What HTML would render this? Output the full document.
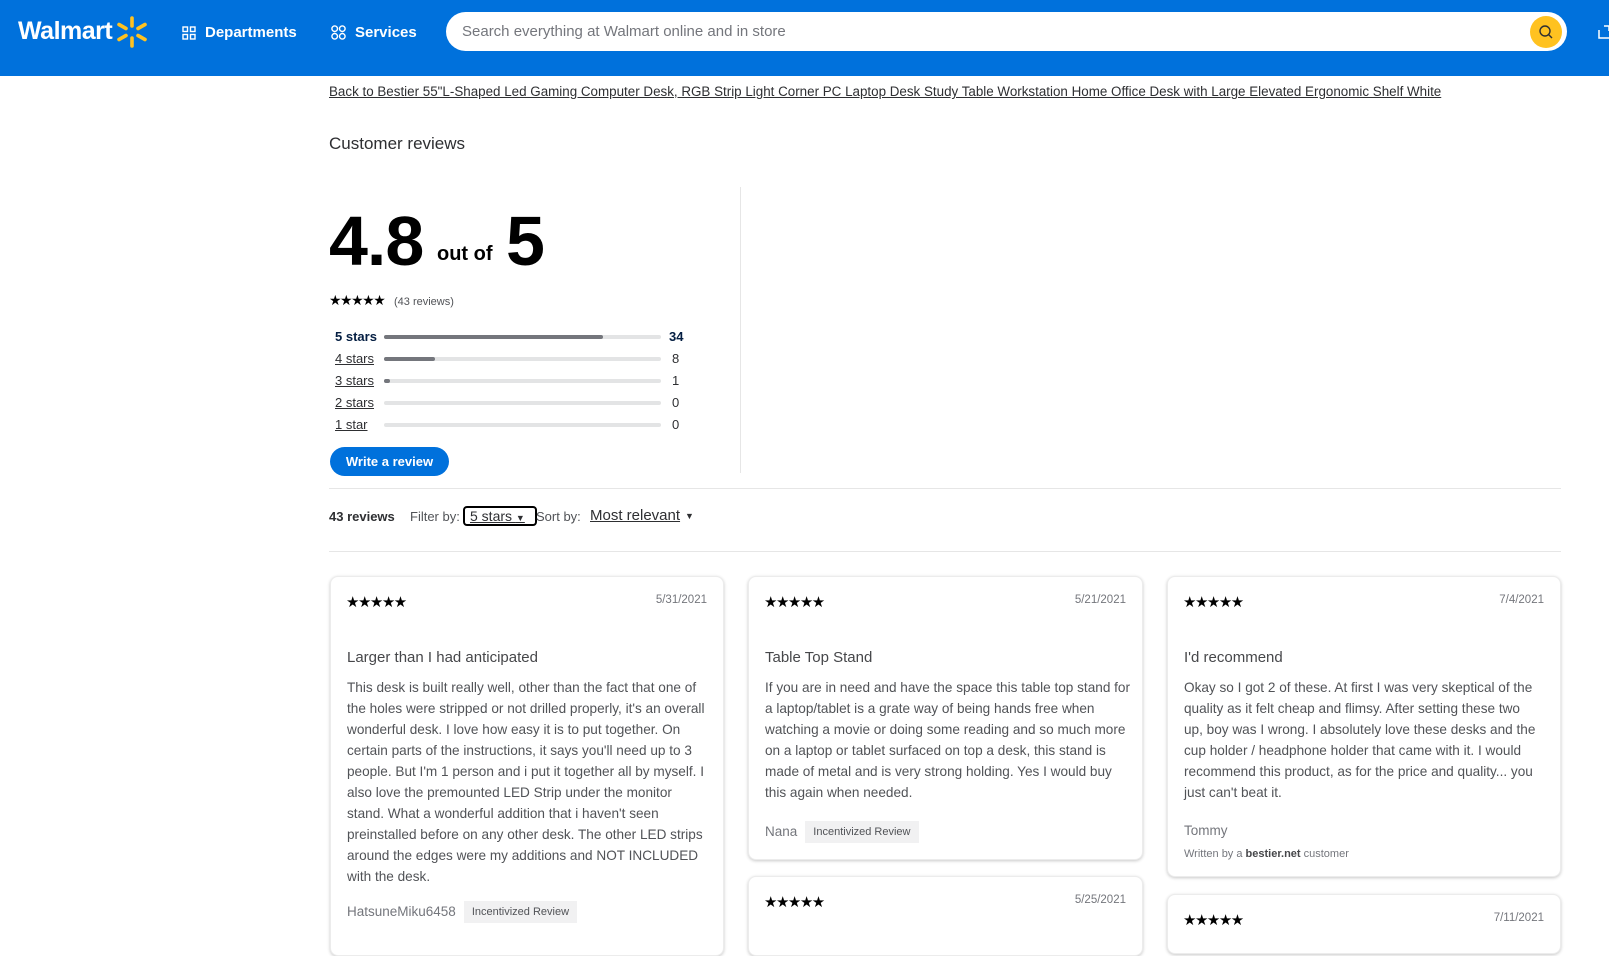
<!DOCTYPE html>
<html><head><meta charset="utf-8"><style>
*{margin:0;padding:0;box-sizing:border-box}
body{width:1609px;height:935px;overflow:hidden;background:#fff;font-family:"Liberation Sans",sans-serif;color:#2e2f32;position:relative}
.a{position:absolute;white-space:nowrap}
.hdr{position:absolute;left:0;top:0;width:1609px;height:76px;background:#0071dc}
.search{position:absolute;left:446px;top:12px;width:1121px;height:39px;background:#fff;border-radius:20px}
.sbtn{position:absolute;left:1530px;top:16px;width:32px;height:32px;border-radius:50%;background:#ffc220}
.bar{position:absolute;left:384px;width:277px;height:4px;background:#e3e4e5;border-radius:2px}
.bar i{position:absolute;left:0;top:0;height:4px;background:#74767c;border-radius:2px}
.lbl{position:absolute;left:335px;font-size:13px;text-decoration:underline;color:#2e2f32}
.cnt{position:absolute;left:672px;font-size:13px}
.card{position:absolute;background:#fff;border-radius:8px;box-shadow:0 1px 3px rgba(0,0,0,.22);border:1px solid #ececec}
.stars{position:absolute;left:15px;top:16px;font-size:15px;letter-spacing:-1.5px;color:#000}
.date{position:absolute;right:16px;top:17px;font-size:11.5px;color:#74767c}
.ttl{position:absolute;left:16px;top:72px;font-size:15px;color:#46474a}
.body{position:absolute;left:16px;top:100px;font-size:13.6px;line-height:21px;color:#515357;white-space:nowrap}
.name{font-size:13.5px;color:#74767c}
.badge{display:inline-block;background:#f1f1f2;color:#515357;font-size:11px;padding:5px 8px;margin-left:8px;vertical-align:middle}
</style></head><body>
<div class="hdr">
 <div class="a" style="left:18px;top:17px;font-size:25px;font-weight:bold;color:#fff;letter-spacing:-0.5px">Walmart</div>
 <svg class="a" style="left:116px;top:15px" width="32" height="34" viewBox="0 0 32 34"><g stroke="#ffc220" stroke-width="3.6" stroke-linecap="round"><line x1="16" y1="3" x2="16" y2="11"/><line x1="16" y1="23" x2="16" y2="31"/><line x1="3" y1="9.5" x2="10" y2="13.5"/><line x1="29" y1="9.5" x2="22" y2="13.5"/><line x1="3" y1="24.5" x2="10" y2="20.5"/><line x1="29" y1="24.5" x2="22" y2="20.5"/></g></svg>
 <svg class="a" style="left:182px;top:26px" width="14" height="14" viewBox="0 0 14 14" fill="none" stroke="#fff" stroke-width="1.4"><rect x="1" y="1" width="4.5" height="4.5"/><rect x="8.5" y="1" width="4.5" height="4.5"/><rect x="1" y="8.5" width="4.5" height="4.5"/><rect x="8.5" y="8.5" width="4.5" height="4.5"/></svg>
 <div class="a" style="left:205px;top:24px;font-size:15px;font-weight:bold;color:#fff">Departments</div>
 <svg class="a" style="left:331px;top:25px" width="15" height="15" viewBox="0 0 15 15" fill="none" stroke="#fff" stroke-width="1.4"><circle cx="3.7" cy="3.7" r="2.8"/><circle cx="11.3" cy="3.7" r="2.8"/><circle cx="3.7" cy="11.3" r="2.8"/><circle cx="11.3" cy="11.3" r="2.8"/></svg>
 <div class="a" style="left:355px;top:24px;font-size:15px;font-weight:bold;color:#fff">Services</div>
 <div class="search"><div class="a" style="left:16px;top:11px;font-size:15px;color:#74767c">Search everything at Walmart online and in store</div></div>
 <div class="sbtn"><svg width="32" height="32" viewBox="0 0 32 32" fill="none" stroke="#2e2f32" stroke-width="1.4"><circle cx="15" cy="15" r="5"/><line x1="18.5" y1="18.5" x2="22" y2="22"/></svg></div>
 <svg class="a" style="left:1598px;top:24px" width="14" height="16" viewBox="0 0 14 16" fill="none" stroke="#fff" stroke-width="1.5"><path d="M1 6v8h12"/><path d="M6 2h5v5"/></svg>
</div>
<div class="a" style="left:329px;top:84px;font-size:13.4px;text-decoration:underline;color:#2e2f32">Back to Bestier 55"L-Shaped Led Gaming Computer Desk, RGB Strip Light Corner PC Laptop Desk Study Table Workstation Home Office Desk with Large Elevated Ergonomic Shelf White</div>
<div class="a" style="left:329px;top:134px;font-size:17px;color:#2e2f32">Customer reviews</div>
<div class="a" style="left:329px;top:201px;font-size:70px;font-weight:bold;color:#000;letter-spacing:-1px">4.8</div>
<div class="a" style="left:437px;top:243px;font-size:20px;font-weight:bold;color:#000">out of</div>
<div class="a" style="left:506px;top:201px;font-size:70px;font-weight:bold;color:#000">5</div>
<div class="a" style="left:740px;top:187px;width:1px;height:286px;background:#e6e6e6"></div>
<div class="a" style="left:329px;top:292px;font-size:14px;color:#000;letter-spacing:-1.5px">★★★★★</div>
<div class="a" style="left:394px;top:296px;font-size:11px;color:#515357">(43 reviews)</div>
<div class="lbl" style="top:329px;font-weight:bold;text-decoration:none;color:#041e42">5 stars</div>
<div class="bar" style="top:335px"><i style="width:219px"></i></div>
<div class="cnt" style="top:329px;left:669px;font-weight:bold;color:#041e42">34</div>
<div class="lbl" style="top:351px">4 stars</div>
<div class="bar" style="top:357px"><i style="width:51px"></i></div>
<div class="cnt" style="top:351px">8</div>
<div class="lbl" style="top:373px">3 stars</div>
<div class="bar" style="top:379px"><i style="width:6px"></i></div>
<div class="cnt" style="top:373px">1</div>
<div class="lbl" style="top:395px">2 stars</div>
<div class="bar" style="top:401px"></div>
<div class="cnt" style="top:395px">0</div>
<div class="lbl" style="top:417px">1 star</div>
<div class="bar" style="top:423px"></div>
<div class="cnt" style="top:417px">0</div>
<div class="a" style="left:330px;top:447px;width:119px;height:29px;border-radius:15px;background:#0071dc;color:#fff;font-size:13px;font-weight:bold;text-align:center;line-height:29px">Write a review</div>
<div class="a" style="left:329px;top:488px;width:1232px;height:1px;background:#e6e6e6"></div>
<div class="a" style="left:329px;top:509px;font-size:13px;font-weight:bold">43 reviews</div>
<div class="a" style="left:410px;top:509px;font-size:13px;color:#515357">Filter by:</div>
<div class="a" style="left:463px;top:506px;width:74px;height:20px;border:2px solid #000;border-radius:4px"></div>
<div class="a" style="left:470px;top:508px;font-size:14px;text-decoration:underline">5 stars <span style="font-size:9px;text-decoration:none">▼</span></div>
<div class="a" style="left:536px;top:509px;font-size:13px;color:#515357">Sort by:</div>
<div class="a" style="left:590px;top:507px;font-size:15px;text-decoration:underline">Most relevant</div>
<div class="a" style="left:685px;top:511px;font-size:9px">▼</div>
<div class="a" style="left:329px;top:551px;width:1232px;height:1px;background:#e6e6e6"></div>

<div class="card" style="left:330px;top:576px;width:394px;height:380px">
 <div class="stars">★★★★★</div><div class="date">5/31/2021</div>
 <div class="ttl">Larger than I had anticipated</div>
 <div class="body">This desk is built really well, other than the fact that one of<br>the holes were stripped or not drilled properly, it's an overall<br>wonderful desk. I love how easy it is to put together. On<br>certain parts of the instructions, it says you'll need up to 3<br>people. But I'm 1 person and i put it together all by myself. I<br>also love the premounted LED Strip under the monitor<br>stand. What a wonderful addition that i haven't seen<br>preinstalled before on any other desk. The other LED strips<br>around the edges were my additions and NOT INCLUDED<br>with the desk.</div>
 <div class="a" style="left:16px;top:324px"><span class="name">HatsuneMiku6458</span><span class="badge">Incentivized Review</span></div>
</div>

<div class="card" style="left:748px;top:576px;width:395px;height:284px">
 <div class="stars">★★★★★</div><div class="date">5/21/2021</div>
 <div class="ttl">Table Top Stand</div>
 <div class="body">If you are in need and have the space this table top stand for<br>a laptop/tablet is a grate way of being hands free when<br>watching a movie or doing some reading and so much more<br>on a laptop or tablet surfaced on top a desk, this stand is<br>made of metal and is very strong holding. Yes I would buy<br>this again when needed.</div>
 <div class="a" style="left:16px;top:244px"><span class="name">Nana</span><span class="badge">Incentivized Review</span></div>
</div>
<div class="card" style="left:748px;top:876px;width:395px;height:80px">
 <div class="stars">★★★★★</div><div class="date">5/25/2021</div>
</div>

<div class="card" style="left:1167px;top:576px;width:394px;height:301px">
 <div class="stars">★★★★★</div><div class="date">7/4/2021</div>
 <div class="ttl">I'd recommend</div>
 <div class="body">Okay so I got 2 of these. At first I was very skeptical of the<br>quality as it felt cheap and flimsy. After setting these two<br>up, boy was I wrong. I absolutely love these desks and the<br>cup holder / headphone holder that came with it. I would<br>recommend this product, as for the price and quality... you<br>just can't beat it.</div>
 <div class="a name" style="left:16px;top:246px">Tommy</div>
 <div class="a" style="left:16px;top:271px;font-size:11px;color:#74767c">Written by a <b style="color:#46474a">bestier.net</b> customer</div>
</div>
<div class="card" style="left:1167px;top:894px;width:394px;height:60px">
 <div class="stars">★★★★★</div><div class="date">7/11/2021</div>
</div>
</body></html>
